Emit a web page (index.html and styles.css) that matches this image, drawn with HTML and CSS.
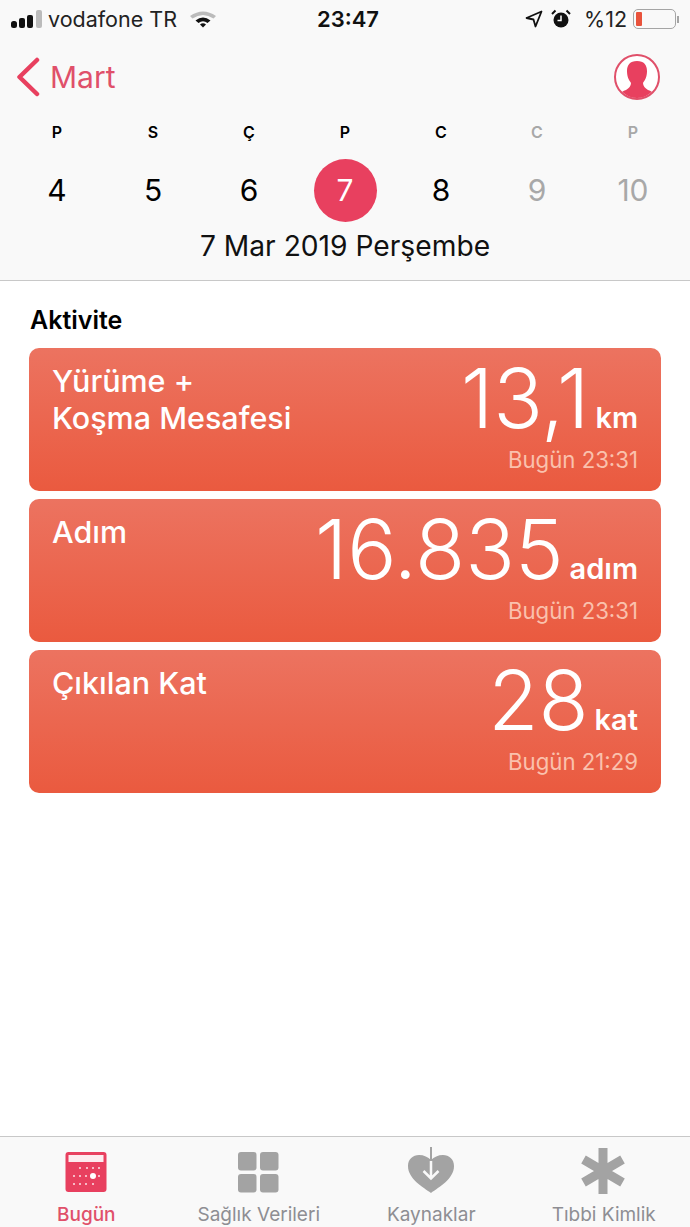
FILE: index.html
```html
<!DOCTYPE html>
<html lang="tr">
<head>
  <meta charset="UTF-8">
  <title>Sağlık</title>
  <link rel="stylesheet" href="styles.css">
</head>
<body>
  <div class="phone">
    <header class="top">
      <div class="status">
        <div class="status-left">
          <svg class="signal" width="31" height="18" viewBox="0 0 31 18">
            <rect x="0" y="11" width="6" height="7" rx="2.500" fill="#111"/>
            <rect x="8" y="8" width="6" height="10" rx="2" fill="#111"/>
            <rect x="16" y="5" width="6" height="13" rx="2" fill="#111"/>
            <rect x="25" y="0" width="6" height="18" rx="2" fill="#bbb"/>
          </svg>
          <span>vodafone TR</span>
          <svg class="wifi" width="26" height="18" viewBox="0 0 26 18">
            <path d="M0 6 Q13 -3 26 6 L23.500 8.500 Q13 1.500 2.500 8.500Z" fill="#bbb"/>
            <path d="M5.500 10.500 Q13 4.500 20.500 10.500 L17.500 13 Q13 9.500 8.500 13Z" fill="#111"/>
            <path d="M10 14.500 Q13 12 16 14.500 L13 17.500Z" fill="#111"/>
          </svg>
        </div>
        <div class="status-time">23:47</div>
        <div class="status-right">
          <svg width="18" height="18" viewBox="0 0 18 18">
            <path d="M16.500 1.500 L1.500 8 L8.500 9.500 L10.500 16.500Z" fill="none" stroke="#111" stroke-width="1.800" stroke-linejoin="round"/>
          </svg>
          <svg class="alarm" width="20" height="20" viewBox="0 0 20 20">
            <circle cx="10" cy="11" r="7.500" fill="#111"/>
            <path d="M10 6.500 V11.500 H6.500" fill="none" stroke="#fff" stroke-width="1.500"/>
            <path d="M1 5 L4.500 1.500 M19 5 L15.500 1.500" stroke="#111" stroke-width="2"/>
          </svg>
          <span>%12</span>
          <div class="battery">
            <div class="battery-body"><div class="battery-fill"></div></div>
            <div class="battery-tip"></div>
          </div>
        </div>
      </div>

      <div class="nav">
        <a class="back">
          <svg width="25" height="40" viewBox="0 0 25 40">
            <path d="M21 3 L3.500 20 L21 37" fill="none" stroke="#e8405f" stroke-width="4.500" stroke-linecap="round" stroke-linejoin="round"/>
          </svg>
          <span>Mart</span>
        </a>
        <svg class="avatar" width="48" height="48" viewBox="0 0 48 48">
          <defs>
            <clipPath id="avatarClip"><circle cx="24" cy="24" r="21"/></clipPath>
          </defs>
          <circle cx="24" cy="24" r="22" fill="#fff" stroke="#e0506a" stroke-width="2"/>
          <path clip-path="url(#avatarClip)" fill="#e8405f" d="M24 8 C31 8 34 12 34 18 C34 24 32 27 30 30 C30 33 32 35 35 37 C38 38 40 39 41 42 V48 H7 V42 C8 39 10 38 13 37 C16 35 18 33 18 30 C16 27 14 24 14 18 C14 12 17 8 24 8Z"/>
        </svg>
      </div>

      <div class="week">
        <div class="day"><span class="dow">P</span><span class="num">4</span></div>
        <div class="day"><span class="dow">S</span><span class="num">5</span></div>
        <div class="day"><span class="dow">Ç</span><span class="num">6</span></div>
        <div class="day"><span class="dow">P</span><span class="num today">7</span></div>
        <div class="day"><span class="dow">C</span><span class="num">8</span></div>
        <div class="day off"><span class="dow">C</span><span class="num">9</span></div>
        <div class="day off"><span class="dow">P</span><span class="num">10</span></div>
      </div>
      <div class="date-title">7 Mar 2019 Perşembe</div>
    </header>

    <main class="content">
      <h2 class="section-title">Aktivite</h2>

      <div class="card">
        <div class="card-name">Yürüme +<br>Koşma Mesafesi</div>
        <div class="card-data">
          <div class="card-value"><span class="big">13,1</span><span class="unit">km</span></div>
          <div class="card-time">Bugün 23:31</div>
        </div>
      </div>

      <div class="card">
        <div class="card-name">Adım</div>
        <div class="card-data">
          <div class="card-value"><span class="big">16.835</span><span class="unit">adım</span></div>
          <div class="card-time">Bugün 23:31</div>
        </div>
      </div>

      <div class="card">
        <div class="card-name">Çıkılan Kat</div>
        <div class="card-data">
          <div class="card-value"><span class="big">28</span><span class="unit">kat</span></div>
          <div class="card-time">Bugün 21:29</div>
        </div>
      </div>
    </main>

    <nav class="tabs">
      <div class="tab active">
        <svg width="48" height="48" viewBox="0 0 48 48">
          <rect x="3.500" y="5" width="41" height="40" rx="3" fill="#e8405f"/>
          <rect x="6.500" y="8" width="35" height="7" fill="#fff" opacity="0.900"/>
          <g fill="#fff" opacity="0.850">
            <circle cx="18" cy="21" r="1"/><circle cx="25" cy="21" r="1"/><circle cx="31" cy="21" r="1"/><circle cx="37" cy="21" r="1"/>
            <circle cx="12" cy="29" r="1"/><circle cx="18" cy="29" r="1"/><circle cx="24" cy="29" r="1"/><circle cx="37" cy="29" r="1"/>
            <circle cx="12" cy="37" r="1"/><circle cx="18" cy="37" r="1"/><circle cx="24" cy="37" r="1"/><circle cx="31" cy="37" r="1"/>
          </g>
          <circle cx="31" cy="29" r="3" fill="#fff"/>
        </svg>
        <span>Bugün</span>
      </div>
      <div class="tab">
        <svg width="48" height="48" viewBox="0 0 48 48">
          <rect x="3" y="5" width="18.500" height="18.500" rx="3" fill="#a3a3a3"/>
          <rect x="25" y="5" width="18.500" height="18.500" rx="3" fill="#a3a3a3"/>
          <rect x="3" y="27" width="18.500" height="18.500" rx="3" fill="#a3a3a3"/>
          <rect x="25" y="27" width="18.500" height="18.500" rx="3" fill="#a3a3a3"/>
        </svg>
        <span>Sağlık Verileri</span>
      </div>
      <div class="tab">
        <svg width="48" height="48" viewBox="0 0 48 48">
          <path d="M24 46 C16 40 1 32 1 19 C1 12 6 8 12 8 C17 8 21 10 24 13 C27 10 31 8 36 8 C42 8 47 12 47 19 C47 32 32 40 24 46Z" fill="#a3a3a3"/>
          <path d="M24 0 V14" stroke="#a3a3a3" stroke-width="2"/>
          <path d="M24 14 V31 M16.500 24 L24 31.500 L31.500 24" fill="none" stroke="#f9f9f9" stroke-width="2.500"/>
        </svg>
        <span>Kaynaklar</span>
      </div>
      <div class="tab">
        <svg width="48" height="48" viewBox="0 0 48 48">
          <path d="M23 1 V47 M3.500 12.500 L42.500 35.500 M42.500 12.500 L3.500 35.500" stroke="#a3a3a3" stroke-width="9"/>
        </svg>
        <span>Tıbbi Kimlik</span>
      </div>
    </nav>
  </div>
</body>
</html>
```

FILE: styles.css
```css
* {
  box-sizing: border-box;
}
html, body {
  margin: 0;
  padding: 0;
}
body {
  font-family: Inter, "Noto Sans", sans-serif;
  color: #000;
  background-color: #fff;
}
.phone {
  width: 690px;
  height: 1227px;
  display: flex;
  flex-direction: column;
  overflow: hidden;
}
.top {
  height: 281px;
  background-color: #f9f9f9;
  border-bottom: 1px solid #c8c8c8;
}
.status {
  height: 38px;
  padding: 0 11px;
  display: grid;
  grid-template-columns: 1fr auto 1fr;
  align-items: center;
  font-size: 21.500px;
  color: #222;
}
.status-left {
  display: flex;
  align-items: center;
  gap: 6px;
}
.wifi {
  margin-left: 7px;
}
.status-time {
  margin-left: 6px;
  font-size: 22px;
  font-weight: 600;
  color: #111;
}
.status-right {
  display: flex;
  align-items: center;
  justify-content: flex-end;
  gap: 6px;
}
.alarm {
  margin: 0 7px 0 2px;
}
.battery {
  display: flex;
  align-items: center;
}
.battery-body {
  width: 43px;
  height: 20px;
  padding: 2px;
  border: 1.500px solid #a5a5a5;
  border-radius: 5px;
}
.battery-fill {
  width: 6px;
  height: 100%;
  background-color: #e9533c;
  border-radius: 1px;
}
.battery-tip {
  width: 2px;
  height: 7px;
  margin-left: 1px;
  background-color: #a5a5a5;
}
.nav {
  height: 78px;
  padding: 0 29px 0 16px;
  display: flex;
  align-items: center;
  justify-content: space-between;
}
.back {
  display: flex;
  align-items: center;
  gap: 9px;
  font-size: 30px;
  color: #e0506a;
}
.week {
  padding: 0 9px;
  display: grid;
  grid-template-columns: repeat(7, 1fr);
}
.day {
  display: flex;
  flex-direction: column;
  align-items: center;
}
.dow {
  height: 28px;
  margin-top: 2px;
  font-size: 16px;
  font-weight: 600;
  line-height: 28px;
}
.num {
  width: 63px;
  height: 63px;
  margin-top: 13px;
  font-size: 30px;
  line-height: 63px;
  text-align: center;
  border-radius: 50%;
}
.today {
  color: #fff;
  background-color: #e8405f;
}
.off {
  color: #a8a8a8;
}
.date-title {
  margin-top: 7px;
  font-size: 28.200px;
  line-height: 34px;
  text-align: center;
  color: #111;
}
.content {
  flex: 1;
  padding: 23px 29px 0 29px;
}
.section-title {
  margin: 0 0 12px 1px;
  font-size: 25px;
  font-weight: 600;
  line-height: 32px;
}
.card {
  height: 143px;
  margin-bottom: 8px;
  padding: 14px 23px 16px 23px;
  display: flex;
  justify-content: space-between;
  color: #fff;
  border-radius: 10px;
  background: linear-gradient(#ec7360, #ea5a3f);
}
.card-name {
  font-size: 30.500px;
  font-weight: 500;
  line-height: 37px;
}
.card-data {
  display: flex;
  flex-direction: column;
  align-items: flex-end;
}
.card-value {
  display: flex;
  align-items: baseline;
  gap: 6px;
  height: 84px;
  margin-top: -1px;
}
.big {
  font-size: 82px;
  font-weight: 300;
  line-height: 76px;
}
.unit {
  font-size: 29px;
  font-weight: 600;
}
.card-time {
  font-size: 22.200px;
  line-height: 29px;
  color: #fac1ad;
}
.tabs {
  height: 91px;
  padding-top: 10px;
  display: grid;
  grid-template-columns: repeat(4, 1fr);
  background-color: #f9f9f9;
  border-top: 1px solid #c8c8c8;
}
.tab {
  display: flex;
  flex-direction: column;
  align-items: center;
  font-size: 19px;
  color: #8e8e93;
}
.tab span {
  margin-top: 8px;
  line-height: 24px;
}
.tab.active {
  color: #e0506a;
  font-weight: 500;
}
```
